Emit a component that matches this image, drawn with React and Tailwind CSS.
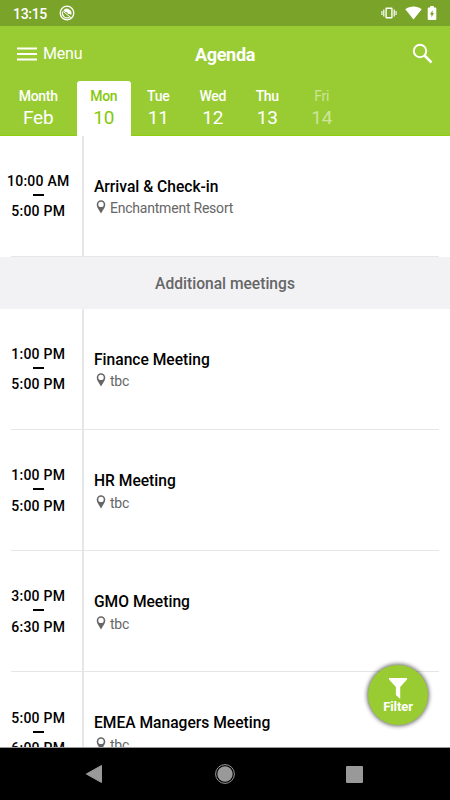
const days = [
  { label: 'Mon', value: '10', active: true },
  { label: 'Tue', value: '11' },
  { label: 'Wed', value: '12' },
  { label: 'Thu', value: '13' },
  { label: 'Fri', value: '14', disabled: true },
];

const meetings = [
  { start: '1:00 PM', end: '5:00 PM', title: 'Finance Meeting', place: 'tbc' },
  { start: '1:00 PM', end: '5:00 PM', title: 'HR Meeting', place: 'tbc' },
  { start: '3:00 PM', end: '6:30 PM', title: 'GMO Meeting', place: 'tbc' },
  { start: '5:00 PM', end: '6:00 PM', title: 'EMEA Managers Meeting', place: 'tbc' },
];

function StatusBar() {
  return (
    <div className="h-[26px] shrink-0 bg-[#7aa32a] flex items-center justify-between px-[13px] text-white">
      <div className="flex items-center gap-[12px]">
        <span className="w-[34px] pt-[2px] text-[14px] leading-[24px] font-medium tracking-[-0.3px] whitespace-nowrap">13:15</span>
        <svg width="16" height="16" viewBox="0 0 16 16" fill="none">
          <circle cx="8" cy="8" r="6.8" stroke="white" strokeWidth="1.3" />
          <path d="M4.4 5.2A4.7 4.7 0 0 1 12.3 9.8L10.4 8.9 9.3 9.3 8 7.3 6.1 7.1Z" fill="white" />
          <path d="M3.6 6.7A4.7 4.7 0 0 0 10.6 12.1" stroke="white" strokeWidth="1.1" />
          <path d="M4.3 6.6L12.5 13" stroke="white" strokeWidth="1" />
        </svg>
      </div>
      <div className="flex items-center">
        <svg width="16" height="12" viewBox="0 0 16 12" fill="white">
          <path fillRule="evenodd" d="M5.3 0.5h5.4a.9.9 0 0 1 .9.9v9.2a.9.9 0 0 1-.9.9H5.3a.9.9 0 0 1-.9-.9V1.4a.9.9 0 0 1 .9-.9ZM5.8 2v8h4.4V2Z" />
          <path d="M2.2 2.5h1.2v7H2.2ZM.4 4h1.1v4H.4ZM12.6 2.5h1.2v7h-1.2ZM14.5 4h1.1v4h-1.1Z" />
        </svg>
        <svg className="ml-[8px]" width="17" height="14" viewBox="0 0 17 14" fill="white">
          <path d="M8.5 13.5L.3 3.2C2.6 1.4 5.4.5 8.5.5s5.9.9 8.2 2.7Z" />
        </svg>
        <svg className="ml-[5px]" width="10" height="14" viewBox="0 0 10 14">
          <path d="M3.2 0h3.6v1.5h1.5a1 1 0 0 1 1 1V13a1 1 0 0 1-1 1H1.7a1 1 0 0 1-1-1V2.5a1 1 0 0 1 1-1h1.5Z" fill="white" />
          <path d="M5.6 4.2v2.8h1.5L4.4 11.2V8.4H2.9Z" fill="#7aa32a" />
        </svg>
      </div>
    </div>
  );
}

function DayTab({ label, value, active, disabled }) {
  return (
    <div
      className={`flex flex-col items-center w-[54.5px] h-[55px] shrink-0 rounded-t-[3px] pt-[5.5px] ${
        active ? 'bg-white text-[#85c80a]' : ''
      } ${disabled ? 'text-white/50' : ''}`}
    >
      <span className={`text-[14px] leading-5 tracking-[-0.3px] ${disabled ? '' : 'font-medium'}`}>{label}</span>
      <span className="text-[19px] leading-[24px] tracking-[-0.2px]">{value}</span>
    </div>
  );
}

function Header() {
  return (
    <header className="h-[109.5px] shrink-0 bg-[#99cc33] text-white border-b border-[#8fce0c] flex flex-col">
      <div className="h-[54.5px] shrink-0 grid grid-cols-3 items-center">
        <button type="button" className="flex items-center gap-[6px] pl-[17px] pt-px">
          <svg width="20" height="14" viewBox="0 0 20 14" fill="white">
            <path d="M0 .5h20v2H0ZM0 6h20v2H0ZM0 11.5h20v2H0Z" />
          </svg>
          <span className="text-[16px] leading-5 pt-px tracking-[-0.2px]">Menu</span>
        </button>
        <h1 className="text-center text-[18px] leading-6 font-bold pt-[3px] tracking-[-0.3px]">Agenda</h1>
        <button type="button" className="justify-self-end mr-[17px]" aria-label="Search">
          <svg width="21" height="21" viewBox="0 0 21 21" fill="none" stroke="white">
            <circle cx="8" cy="8" r="6.2" strokeWidth="2" />
            <path d="M12.5 12.5L19.5 19.5" strokeWidth="2.5" />
          </svg>
        </button>
      </div>
      <nav className="flex h-[54px] pl-[11px]">
        <DayTab label="Month" value="Feb" />
        <div className="flex ml-[11px]">
          {days.map(day => (
            <DayTab key={day.label} {...day} />
          ))}
        </div>
      </nav>
    </header>
  );
}

function AgendaRow({ start, end, title, place }) {
  return (
    <div className="h-[121.2px] shrink-0 flex flex-col">
      <div className="flex h-[120.2px] shrink-0 overflow-hidden">
        <div className="w-[84px] shrink-0 pr-[5.5px] pt-[35.4px] border-r-2 border-[#e6e6e8] flex flex-col items-center text-[14px] font-medium tracking-[0.25px] text-black">
          <span className="leading-5 whitespace-nowrap">{start}</span>
          <span className="mt-[3px] mb-[5.3px] w-[11px] h-[2px] bg-black" />
          <span className="leading-5 whitespace-nowrap">{end}</span>
        </div>
        <div className="pl-[10px] pt-[41px]">
          <h2 className="text-[15.6px] leading-5 font-medium text-black">{title}</h2>
          <div className="mt-[1.8px] pl-[2px] flex items-start gap-[4px]">
            <svg className="mt-[2px]" width="10" height="14" viewBox="0 0 10 14" fill="#666">
              <path fillRule="evenodd" d="M5 .2a4.3 4.3 0 0 1 4.3 4.3C9.3 7.5 6.9 10 5 13.5 3.1 10 .7 7.5.7 4.5A4.3 4.3 0 0 1 5 .2ZM5 1.7a2.7 2.7 0 1 0 0 5.4 2.7 2.7 0 0 0 0-5.4Z" />
            </svg>
            <span className="text-[14px] leading-5 tracking-[-0.22px] text-[#666]">{place}</span>
          </div>
        </div>
      </div>
      <div className="h-px shrink-0 mx-[11px] bg-[#e6e6e7]" />
    </div>
  );
}

function FilterButton() {
  return (
    <button
      type="button"
      className="absolute left-[368.3px] top-[665.4px] w-[59.5px] h-[59.5px] rounded-full bg-[#99cc33] shadow-[0_0_4px_1px_rgba(0,0,0,0.6)] flex flex-col items-center pt-[12.6px] text-white"
    >
      <svg width="18" height="21" viewBox="0 0 18 21" fill="white">
        <path d="M0 0h18v1.5L11.2 9V21L6.9 17V9L0 1.5Z" />
      </svg>
      <span className="text-[13px] leading-[16px] font-bold tracking-[-0.1px]">Filter</span>
    </button>
  );
}

function NavBar() {
  return (
    <div className="h-[53px] shrink-0 bg-black border-t border-[#999] grid grid-cols-[1fr_70px_1fr] items-center">
      <svg className="ml-[85px]" width="18" height="20" viewBox="0 0 18 20">
        <path d="M16.5 1.5v17L1.3 10Z" fill="#999" stroke="#999" strokeLinejoin="round" />
      </svg>
      <svg className="justify-self-center" width="20" height="20" viewBox="0 0 20 20">
        <circle cx="10" cy="10" r="9.4" fill="none" stroke="#999" />
        <circle cx="10" cy="10" r="7.7" fill="#999" />
      </svg>
      <div className="ml-[86px] w-[17px] h-[17px] rounded-[1px] bg-[#999]" />
    </div>
  );
}

export default function App() {
  return (
    <div className="relative w-[450px] h-[800px] overflow-hidden bg-white flex flex-col font-[Roboto,sans-serif]">
      <StatusBar />
      <Header />
      <main className="flex-1 min-h-0 overflow-hidden flex flex-col">
        <AgendaRow start="10:00 AM" end="5:00 PM" title="Arrival & Check-in" place="Enchantment Resort" />
        <div className="h-[52px] shrink-0 bg-[#f2f2f5] flex items-center justify-center pt-[4px] text-[15.6px] font-medium text-[#666]">
          Additional meetings
        </div>
        {meetings.map(meeting => (
          <AgendaRow key={meeting.title} {...meeting} />
        ))}
      </main>
      <FilterButton />
      <NavBar />
    </div>
  );
}
